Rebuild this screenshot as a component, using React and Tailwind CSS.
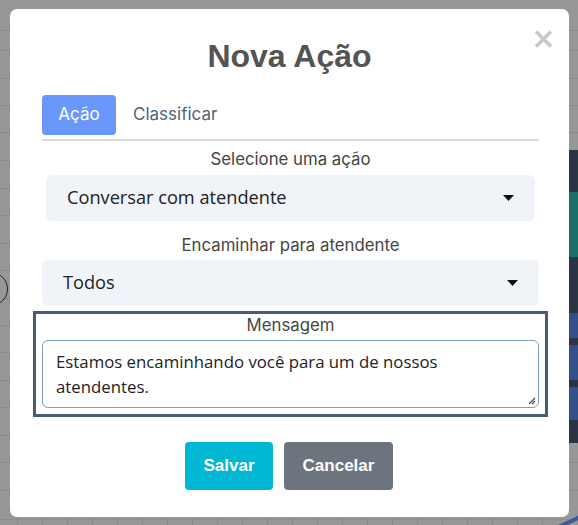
import React from "react";

function Caret() {
  return (
    <svg width="11" height="6" viewBox="0 0 11 6" className="shrink-0">
      <path d="M0 0 L11 0 L5.5 6 Z" fill="#111" />
    </svg>
  );
}

export default function App() {
  const vlines = [17, 42, 67, 92, 117, 142, 167, 192, 217, 242, 267, 292, 317, 342, 367, 392, 417, 442, 467, 492, 517, 542];
  const hlines = [30, 50, 78, 105, 132, 160, 188, 215, 243, 270, 298, 325, 352, 380, 407, 435, 462, 490, 519];
  return (
    <div className="relative w-[578px] h-[525px] overflow-hidden bg-[#979797]" style={{ fontFamily: "'Open Sans', sans-serif" }}>
      {/* dimmed background page */}
      <div className="absolute inset-0">
        {hlines.map((y) => (
          <div key={"h" + y} className="absolute left-0 right-0 h-px bg-[#8c8c8c]" style={{ top: y }} />
        ))}
        {vlines.map((x) => (
          <div key={"v" + x} className="absolute top-[517px] bottom-0 w-px bg-[#8a8a8a]" style={{ left: x }} />
        ))}
        <div className="absolute left-[-26px] top-[272px] w-[34px] h-[34px] rounded-full border border-[#222]" />
        <div className="absolute left-[566px] top-[150px] w-[20px] h-[293px] bg-[#2a3442]">
          <div className="mt-[42px] h-[65px] bg-[#1a6f6a]" />
          <div className="mt-[56px] h-[25px] bg-[#34508a]" />
          <div className="mt-[7px] h-[35px] bg-[#34508a]" />
          <div className="mt-[7px] h-[33px] bg-[#34508a]" />
        </div>
        <div className="absolute left-[540px] top-[522px] w-[50px] h-[4px] bg-[#3c5aa0] -rotate-[25deg]" />
      </div>

      {/* modal */}
      <div className="absolute left-[10px] top-[9px] w-[559px] h-[508px] bg-white rounded-[7px]">
        <svg className="absolute left-[524px] top-[21px]" width="19" height="18" viewBox="0 0 19 18">
          <path d="M2 1.5 L17 16.5 M17 1.5 L2 16.5" stroke="#c9c9c9" strokeWidth="3.6" />
        </svg>
        <h1 className="pt-[27px] text-center text-[32px] leading-[40px] font-bold text-[#545454]" style={{ fontFamily: "'Liberation Sans', Arial, sans-serif" }}>
          Nova Ação
        </h1>

        <div className="pl-[32px] pr-[30px] pt-[19px]">
          <div className="flex items-center gap-[17px] pb-[4px] border-b-2 border-[#dadada]">
            <div className="w-[74px] h-[40px] rounded-[4px] bg-[#6a97fc] text-white text-[17px] flex items-center justify-center" style={{ fontFamily: "Inter, sans-serif" }}>
              Ação
            </div>
            <div className="text-[17px] text-[#4f627d]" style={{ fontFamily: "Inter, sans-serif" }}>Classificar</div>
          </div>

          <div className="mt-[7px] text-center text-[16.8px] leading-[22px] text-[#454545]" style={{ fontFamily: "Inter, sans-serif" }}>
            Selecione uma ação
          </div>
          <div className="mx-[4px] mt-[5px] h-[46px] rounded-[6px] bg-[#f0f3f8] flex items-center justify-between pl-[21px] pr-[21px]">
            <span className="text-[18.2px] text-[#222]">Conversar com atendente</span>
            <Caret />
          </div>

          <div className="mt-[13px] text-center text-[16.8px] leading-[22px] text-[#454545]" style={{ fontFamily: "Inter, sans-serif" }}>
            Encaminhar para atendente
          </div>
          <div className="mt-[4px] h-[46px] rounded-[6px] bg-[#f0f3f8] flex items-center justify-between pl-[21px] pr-[21px]">
            <span className="text-[18.2px] text-[#222]">Todos</span>
            <Caret />
          </div>

          <div className="-mx-[9px] mt-[5px] h-[106px] border-[3.5px] border-[#4a5d78] px-[6px] pt-0">
            <div className="text-center text-[16.8px] leading-[22px] text-[#454545]" style={{ fontFamily: "Inter, sans-serif" }}>
              Mensagem
            </div>
            <div className="mt-[4px] h-[68px] rounded-[6px] border border-[#7d9dc5] relative pl-[13px] pr-[60px] pt-[8px] text-[16.8px] leading-[25px] text-[#222]">
              Estamos encaminhando você para um de nossos atendentes.
              <svg className="absolute right-[2px] bottom-[2px]" width="9" height="9" viewBox="0 0 9 9">
                <path d="M8 2 L2 8 M8 5 L5 8" stroke="#444" strokeWidth="1.2" />
              </svg>
            </div>
          </div>

          <div className="mt-[25px] flex justify-center gap-[11px] pr-[3px]">
            <button className="w-[88px] h-[48px] rounded-[4px] bg-[#00b7d4] text-white text-[17px] font-bold" style={{ fontFamily: "'Liberation Sans', Arial, sans-serif" }}>
              Salvar
            </button>
            <button className="w-[109px] h-[48px] rounded-[4px] bg-[#6c757d] text-white text-[17px] font-bold" style={{ fontFamily: "'Liberation Sans', Arial, sans-serif" }}>
              Cancelar
            </button>
          </div>
        </div>
      </div>
    </div>
  );
}
